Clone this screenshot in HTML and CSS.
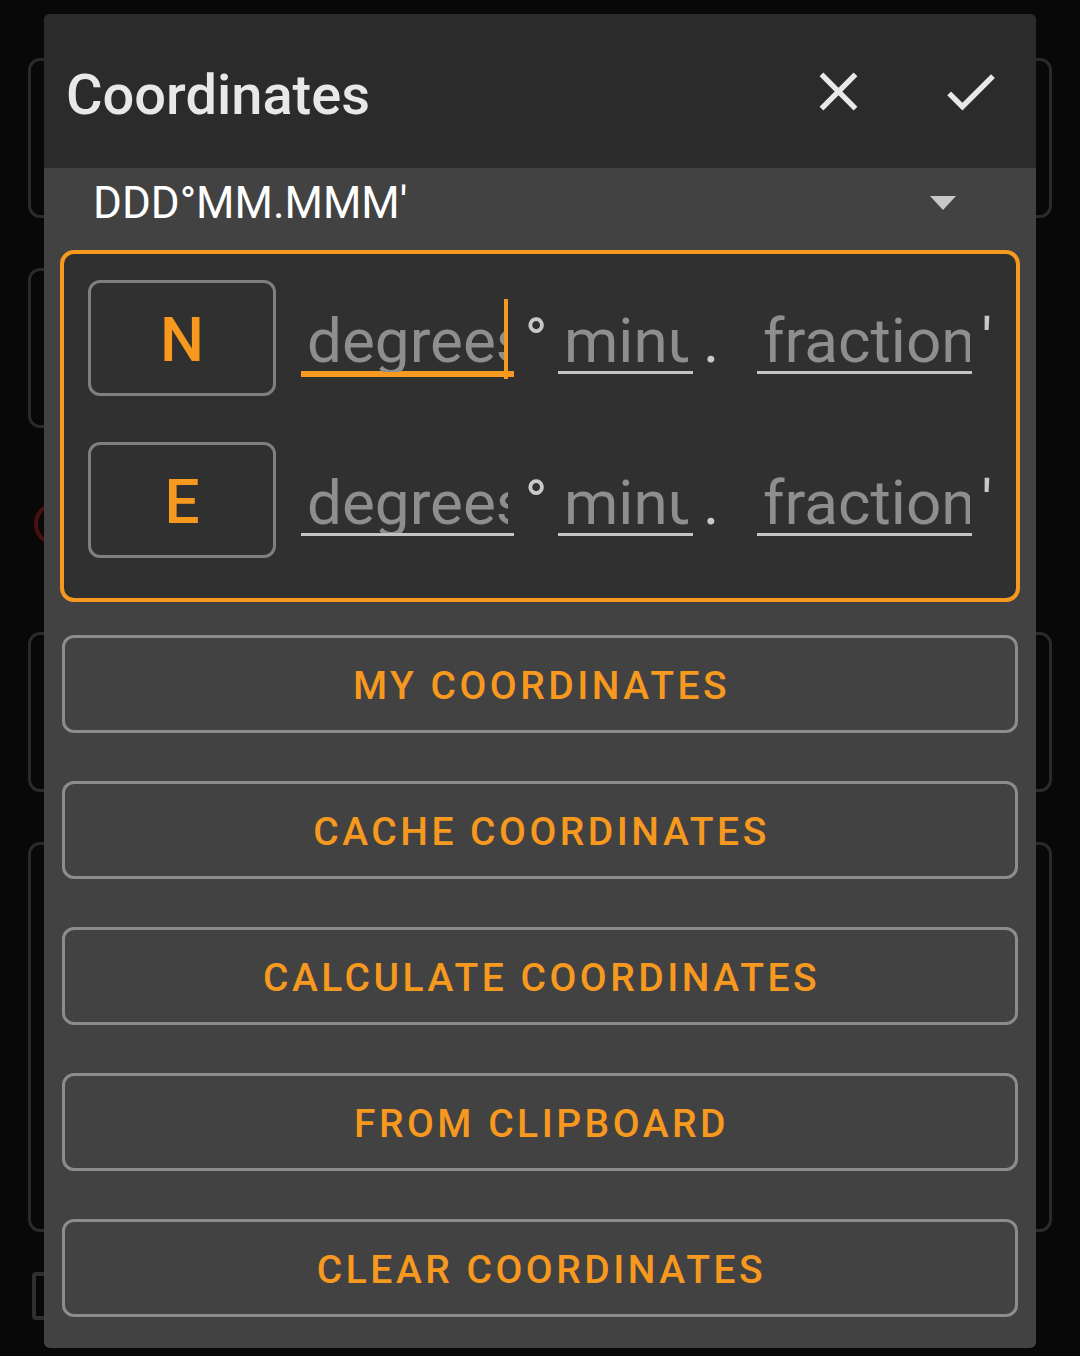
FILE: index.html
```html
<!DOCTYPE html>
<html lang="en">
<head>
<meta charset="utf-8">
<title>Coordinates</title>
<link rel="stylesheet" href="styles.css">
</head>
<body>
<div class="backdrop">
  <div class="bg-card bg-card-1"></div>
  <div class="bg-card bg-card-2"></div>
  <div class="bg-circle"></div>
  <div class="bg-card bg-card-3"></div>
  <div class="bg-card bg-card-4"></div>
  <div class="bg-check"></div>
</div>

<div class="dialog">
  <div class="header">
    <div class="title">Coordinates</div>
    <div class="icon-btn">
      <svg viewBox="0 0 24 24" width="65" height="65"><path fill="#e8e8e8" d="M19 6.41L17.59 5 12 10.59 6.41 5 5 6.41 10.59 12 5 17.59 6.41 19 12 13.41 17.59 19 19 17.59 13.41 12z"/></svg>
    </div>
    <div class="icon-btn">
      <svg viewBox="0 0 24 24" width="65" height="65"><path fill="#e8e8e8" d="M9 16.17L4.83 12l-1.42 1.41L9 19 21 7l-1.41-1.41z"/></svg>
    </div>
  </div>

  <div class="spinner">
    <div class="spinner-text">DDD°MM.MMM'</div>
    <div class="spinner-arrow"></div>
  </div>

  <div class="coord-box">
    <div class="coord-row">
      <div class="hemi">N</div>
      <div class="field field-deg focused"><span>degrees</span><i class="cursor"></i></div>
      <div class="sep sep-deg">°</div>
      <div class="field field-min"><span>minutes</span></div>
      <div class="sep sep-dot">.</div>
      <div class="field field-frac"><span>fraction</span></div>
      <div class="sep sep-min">'</div>
    </div>
    <div class="coord-row">
      <div class="hemi">E</div>
      <div class="field field-deg"><span>degrees</span></div>
      <div class="sep sep-deg">°</div>
      <div class="field field-min"><span>minutes</span></div>
      <div class="sep sep-dot">.</div>
      <div class="field field-frac"><span>fraction</span></div>
      <div class="sep sep-min">'</div>
    </div>
  </div>

  <div class="actions">
    <div class="btn">MY COORDINATES</div>
    <div class="btn">CACHE COORDINATES</div>
    <div class="btn">CALCULATE COORDINATES</div>
    <div class="btn">FROM CLIPBOARD</div>
    <div class="btn">CLEAR COORDINATES</div>
  </div>
</div>
</body>
</html>
```

FILE: styles.css
```css
html, body {
  margin: 0;
  padding: 0;
}
body {
  width: 1080px;
  height: 1356px;
  background: #080808;
  overflow: hidden;
  position: relative;
  font-family: Roboto, "Liberation Sans", sans-serif;
}

/* background page (behind the dialog) */
.backdrop {
  display: flex;
  flex-direction: column;
  padding: 58px 0 0 28px;
}
.bg-card {
  box-sizing: border-box;
  border: 3px solid #2a2a2a;
  border-radius: 12px;
  width: 1024px;
  height: 160px;
}
.bg-card-2 {
  margin-top: 50px;
  width: 700px;
}
.bg-circle {
  box-sizing: border-box;
  margin: 74px 0 0 6px;
  width: 44px;
  height: 44px;
  border: 4px solid #4a0f0f;
  border-radius: 50%;
}
.bg-card-3 {
  margin-top: 86px;
}
.bg-card-4 {
  margin-top: 50px;
  height: 390px;
}
.bg-check {
  box-sizing: border-box;
  margin: 40px 0 0 4px;
  width: 60px;
  height: 48px;
  border: 4px solid #2f2f2f;
  border-radius: 4px;
}

/* dialog overlay */
.dialog {
  position: absolute;
  left: 44px;
  top: 14px;
  width: 992px;
  height: 1334px;
  background: #424242;
  border-radius: 6px;
  overflow: hidden;
  display: flex;
  flex-direction: column;
}
.header {
  height: 154px;
  background: #2b2b2b;
  display: flex;
  align-items: center;
  flex-shrink: 0;
}
.title {
  flex: 1;
  padding-left: 22px;
  padding-top: 8px;
  font-size: 56px;
  font-weight: 500;
  color: #e8e8e8;
}
.icon-btn {
  width: 132px;
  height: 132px;
  display: flex;
  align-items: center;
  justify-content: center;
}
.icon-btn svg {
  display: block;
}

.spinner {
  height: 70px;
  display: flex;
  align-items: center;
  flex-shrink: 0;
}
.spinner-text {
  flex: 1;
  padding-left: 49px;
  font-size: 44px;
  color: #ffffff;
  line-height: 70px;
}
.spinner-arrow {
  width: 0;
  height: 0;
  border-left: 13.5px solid transparent;
  border-right: 13.5px solid transparent;
  border-top: 14px solid #c8c8c8;
  margin-right: 80px;
}

.coord-box {
  margin: 12px 16px 0 16px;
  box-sizing: border-box;
  height: 352px;
  border: 4px solid #f7991f;
  border-radius: 14px;
  background: #303030;
  padding: 26px 0 0 24px;
  display: flex;
  flex-direction: column;
  gap: 46px;
}
.coord-row {
  display: flex;
  align-items: center;
  height: 116px;
}
.hemi {
  box-sizing: border-box;
  width: 188px;
  height: 116px;
  border: 3px solid #7f7f7f;
  border-radius: 12px;
  display: flex;
  align-items: center;
  justify-content: center;
  color: #f7991f;
  font-size: 62px;
  font-weight: 500;
  margin-right: 25px;
  padding-top: 2px;
}
.field {
  position: relative;
  box-sizing: border-box;
  height: 75px;
  margin-bottom: 3px;
  padding: 11px 0 0 6px;
  line-height: 62px;
  font-size: 62px;
  color: #8e8e8e;
  border-bottom: 3px solid #c4c4c4;
  overflow: hidden;
  white-space: nowrap;
}
.field span {
  display: block;
  overflow: hidden;
}
.field.focused {
  height: 78px;
  margin-bottom: 0;
  border-bottom: 6px solid #f7991f;
  overflow: visible;
}
.field-deg { width: 213px; }
.field-deg span { width: 201px; }
.field-min { width: 135px; }
.field-min span { width: 124px; }
.field-frac { width: 215px; }
.field-frac span { width: 207px; }
.cursor {
  position: absolute;
  right: 6px;
  top: 0;
  width: 4px;
  height: 80px;
  background: #f7991f;
}
.sep {
  box-sizing: border-box;
  height: 78px;
  padding-top: 11px;
  line-height: 62px;
  font-size: 62px;
  color: #c8c8c8;
  text-align: center;
}
.sep-deg { width: 44px; }
.sep-dot { width: 40px; text-align: left; padding-left: 10px; margin-right: 24px; }
.sep-min { width: 30px; }

.actions {
  margin: 33px 18px 0 18px;
  display: flex;
  flex-direction: column;
  gap: 48px;
}
.btn {
  box-sizing: border-box;
  height: 98px;
  border: 3px solid #8c8c8c;
  border-radius: 12px;
  display: flex;
  align-items: center;
  justify-content: center;
  color: #f7991f;
  font-size: 39px;
  font-weight: 500;
  letter-spacing: 3.5px;
  padding: 3px 0 0 3px;
}
```
